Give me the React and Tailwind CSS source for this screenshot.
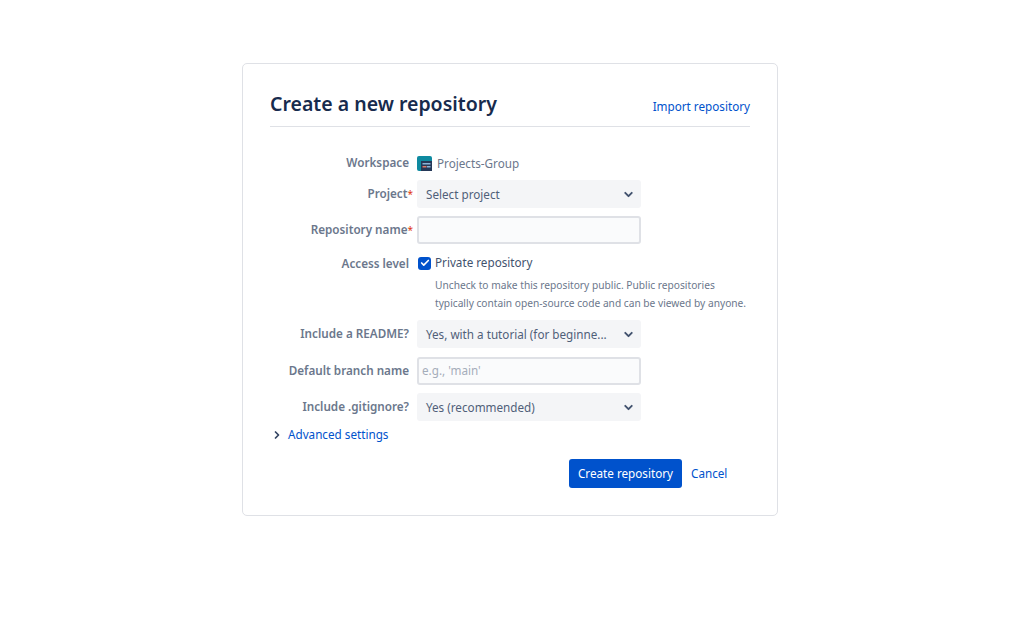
import React from 'react';
import { ChevronDown, ChevronRight, Check } from 'lucide-react';

function Label({ children, required }) {
  return (
    <div className={`${required ? 'w-[143px]' : 'w-[139px]'} shrink-0 text-right text-[11.7px] font-semibold text-[#6b778c] leading-[20px] mb-[2px]`}>
      {children}
      {required ? <span className="text-[#de350b] text-[10px] font-normal">*</span> : null}
    </div>
  );
}

function SelectBox({ value }) {
  return (
    <div className="w-[224px] h-[28px] rounded-[3px] bg-[#f4f5f7] flex items-center justify-between pl-[9px] pr-[6px] text-[11.7px] text-[#505f79]">
      <span className="whitespace-nowrap pt-[1px]">{value}</span>
      <ChevronDown size={13} strokeWidth={3.5} className="text-[#42526e]" />
    </div>
  );
}

function TextBox({ placeholder }) {
  return (
    <div className="w-[224px] h-[28px] rounded-[3px] bg-[#fafbfc] border-2 border-[#dfe1e6] flex items-center px-[3px] text-[11.7px] text-[#a5adba]">
      {placeholder}
    </div>
  );
}

function Row({ label, required, children, className = '' }) {
  return (
    <div className={`flex items-center ${className}`}>
      <Label required={required}>{label}</Label>
      <div className={required ? 'ml-[4px]' : 'ml-[8px]'}>{children}</div>
    </div>
  );
}

function WorkspaceIcon() {
  return (
    <svg width="15" height="15" viewBox="0 0 15 15">
      <rect width="15" height="15" rx="2" fill="#0e8aa0" />
      <rect x="4" y="5" width="11" height="10" fill="#253858" />
      <rect x="5.5" y="7" width="8" height="1.5" fill="#8ab4d8" />
      <rect x="5.5" y="10" width="4" height="1.5" fill="#de7b6a" />
      <rect x="10" y="10" width="3.5" height="1.5" fill="#8ab4d8" />
    </svg>
  );
}

export default function App() {
  return (
    <div className="min-h-[637px] bg-white pt-[63px] pl-[242px] font-['Noto_Sans','Open_Sans',sans-serif]">
      <div className="w-[536px] h-[453px] rounded-[5px] border border-[#dfe1e6] px-[27px]">
        {/* encabezado */}
        <div className="flex items-end justify-between h-[63px] pb-[8px] border-b border-[#dfe1e6]">
          <h1 className="text-[19.5px] leading-[28px] font-semibold text-[#172b4d]">Create a new repository</h1>
          <a className="text-[11.7px] leading-[20px] mb-[2px] text-[#0052cc]">Import repository</a>
        </div>

        <div className="pt-[25px]">
          <Row label="Workspace">
            <div className="flex items-center gap-[5px] text-[11.7px] text-[#6b778c] leading-[20px]">
              <WorkspaceIcon />
              Projects-Group
            </div>
          </Row>
          <Row label="Project" required className="mt-[6px]">
            <SelectBox value="Select project" />
          </Row>
          <Row label="Repository name" required className="mt-[8px]">
            <TextBox />
          </Row>

          <div className="flex mt-[9px]">
            <Label>Access level</Label>
            <div className="ml-[8px]">
              <div className="flex items-center gap-[4px] h-[20px] text-[11.7px] text-[#42526e]">
                <span className="w-[13px] h-[13px] ml-[1px] rounded-[3px] bg-[#0052cc] flex items-center justify-center">
                  <Check size={10} strokeWidth={4} className="text-white" />
                </span>
                Private repository
              </div>
              <p className="ml-[18px] mt-[3px] w-[320px] text-[10.2px] leading-[18px] text-[#6b778c]">
                Uncheck to make this repository public. Public repositories
                <br />
                typically contain open-source code and can be viewed by anyone.
              </p>
            </div>
          </div>

          <Row label="Include a README?" className="mt-[8px]">
            <SelectBox value="Yes, with a tutorial (for beginne..." />
          </Row>
          <Row label="Default branch name" className="mt-[9px]">
            <TextBox placeholder="e.g., 'main'" />
          </Row>
          <Row label="Include .gitignore?" className="mt-[8px]">
            <SelectBox value="Yes (recommended)" />
          </Row>

          <div className="flex items-center mt-[4px] h-[20px] text-[11.7px] text-[#0052cc]">
            <ChevronRight size={12} strokeWidth={3.5} className="text-[#344563] ml-[1px] mr-[5px]" />
            Advanced settings
          </div>

          <div className="flex items-center mt-[14px] ml-[299px]">
            <button className="h-[29px] w-[113px] rounded-[3px] bg-[#0052cc] text-[11.7px] text-white">Create repository</button>
            <a className="ml-[9px] text-[11.7px] text-[#0052cc]">Cancel</a>
          </div>
        </div>
      </div>
    </div>
  );
}
